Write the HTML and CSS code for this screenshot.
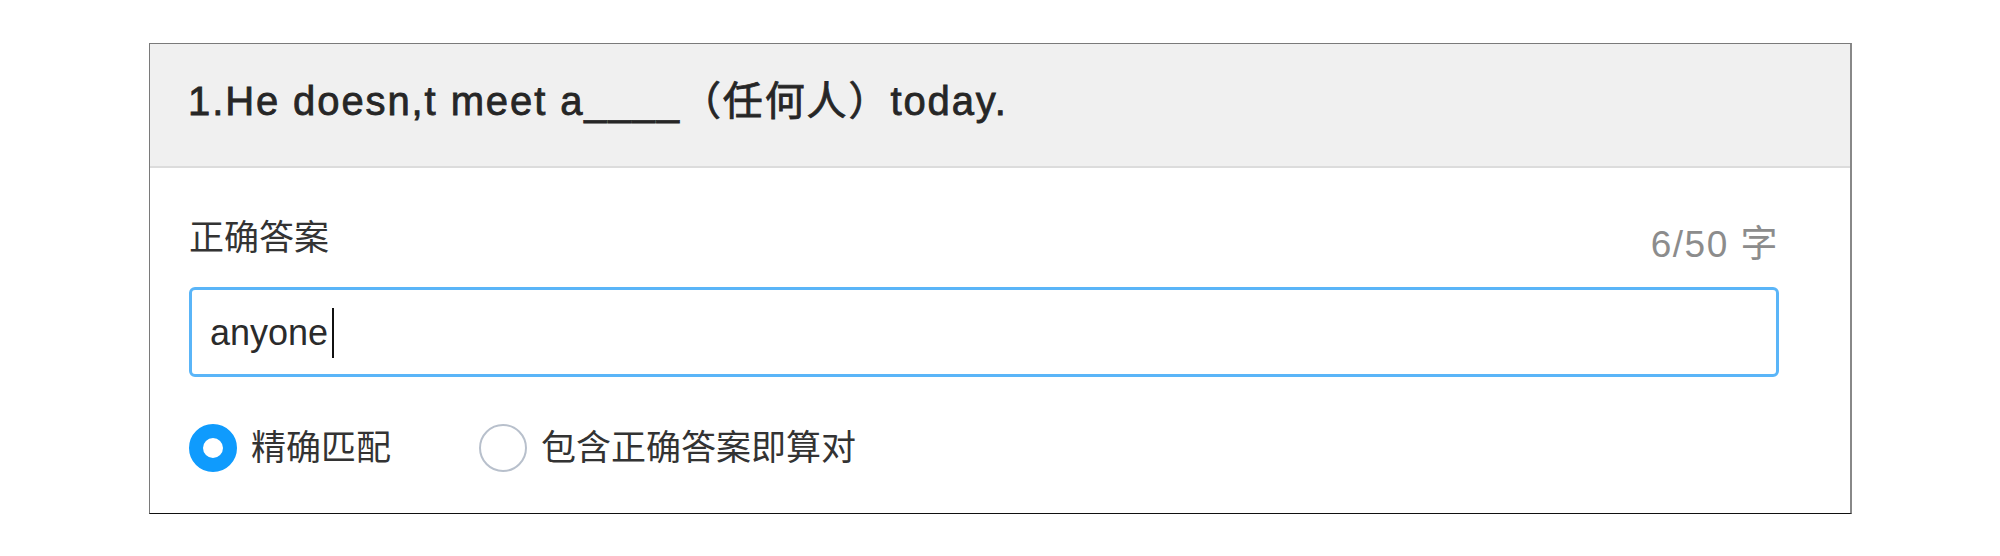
FILE: index.html
```html
<!DOCTYPE html>
<html lang="zh-CN">
<head>
<meta charset="utf-8">
<title>填空题</title>
<link rel="stylesheet" href="styles.css">
</head>
<body>
<div class="card">
  <div class="card-header">
    <span class="question">1.He doesn,t meet a____（任何人）today.</span>
  </div>
  <div class="card-body">
    <div class="label-row">
      <span class="label">正确答案</span>
      <span class="counter">6/50 字</span>
    </div>
    <div class="answer-input">
      <span class="answer-text">anyone</span><span class="caret"></span>
    </div>
    <div class="radio-row">
      <label class="radio checked"><span class="radio-dot"></span><span class="radio-text">精确匹配</span></label>
      <label class="radio"><span class="radio-dot"></span><span class="radio-text">包含正确答案即算对</span></label>
    </div>
  </div>
</div>
</body>
</html>
```

FILE: styles.css
```css
* { box-sizing: border-box; }
html, body { margin: 0; padding: 0; background: #fff; }
body {
  font-family: "Liberation Sans", "Noto Sans CJK SC", sans-serif;
  color: #333;
}
.card {
  margin: 43px 0 0 149px;
  width: 1703px;
  border-top: 1px solid #7a7a7a;
  border-left: 1px solid #7a7a7a;
  border-right: 2px solid #888;
  border-bottom: 1px solid #111;
}
.card-header {
  height: 124px;
  background: #f0f0f0;
  border-bottom: 2px solid #dcdcdc;
  padding: 33px 0 0 38px;
}
.question {
  font-size: 40px;
  line-height: 48px;
  font-weight: normal;
  color: #262626;
  letter-spacing: 1.9px;
  -webkit-text-stroke: 0.8px #262626;
}
.card-body {
  padding: 50px 71px 41px 39px;
}
.label-row {
  display: flex;
  justify-content: space-between;
  align-items: center;
  height: 40px;
}
.label {
  font-size: 35px;
  line-height: 40px;
  color: #333;
}
.counter {
  font-size: 37px;
  line-height: 40px;
  color: #8c8c8c;
  letter-spacing: 1.5px;
  padding-top: 14px;
}
.answer-input {
  margin-top: 29px;
  height: 90px;
  border: 3px solid #5ab5f8;
  border-radius: 6px;
  display: flex;
  align-items: center;
  padding-left: 18px;
}
.answer-text {
  font-size: 36px;
  line-height: 44px;
  color: #2b2b2b;
  padding-top: 2px;
}
.caret {
  display: block;
  width: 2px;
  height: 50px;
  background: #111;
  margin-left: 4px;
  margin-top: 2px;
}
.radio-row {
  margin-top: 47px;
  display: flex;
  align-items: center;
  gap: 88px;
  height: 48px;
}
.radio {
  display: flex;
  align-items: center;
  gap: 14px;
}
.radio-dot {
  width: 48px;
  height: 48px;
  border-radius: 50%;
  border: 2px solid #b8c0cc;
  background: #fff;
}
.radio.checked .radio-dot {
  border: 14px solid #0f9bfd;
}
.radio-text {
  font-size: 35px;
  line-height: 40px;
  color: #333;
}
```
